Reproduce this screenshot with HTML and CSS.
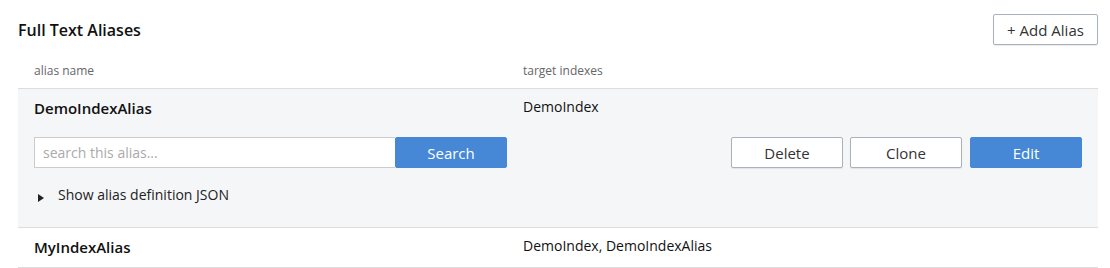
FILE: index.html
```html
<!DOCTYPE html>
<html lang="en">
<head>
    <meta charset="UTF-8">
    <title>Full Text Aliases</title>
    <link rel="stylesheet" href="styles.css">
</head>
<body>
    <div class="panel">
        <div class="panel-header">
            <h2>Full Text Aliases</h2>
            <button class="btn btn-default add-btn">+ Add Alias</button>
        </div>

        <div class="alias-table">
            <div class="table-head">
                <div>alias name</div>
                <div>target indexes</div>
            </div>

            <div class="alias-row expanded">
                <div class="row-main">
                    <div class="alias-name">DemoIndexAlias</div>
                    <div class="alias-targets">DemoIndex</div>
                </div>
                <div class="row-tools">
                    <div class="search-group">
                        <input type="text" placeholder="search this alias...">
                        <button class="btn btn-primary">Search</button>
                    </div>
                    <div class="actions">
                        <button class="btn btn-default">Delete</button>
                        <button class="btn btn-default">Clone</button>
                        <button class="btn btn-primary">Edit</button>
                    </div>
                </div>
                <div class="json-toggle">
                    <span class="caret"></span>
                    Show alias definition JSON
                </div>
            </div>

            <div class="alias-row">
                <div class="row-main">
                    <div class="alias-name">MyIndexAlias</div>
                    <div class="alias-targets">DemoIndex, DemoIndexAlias</div>
                </div>
            </div>
        </div>
    </div>
</body>
</html>
```

FILE: styles.css
```css
body {
    font-family: 'Open Sans', sans-serif;
    margin: 0;
    padding: 0;
    background-color: #fff;
    color: #111;
}
.panel {
    padding: 14px 12px 0 18px;
}
.panel-header {
    display: flex;
    justify-content: space-between;
    align-items: center;
}
.panel-header h2 {
    margin: 0;
    font-size: 16px;
    font-weight: 600;
    color: #111;
}
.btn {
    font-family: 'Open Sans', sans-serif;
    font-size: 15px;
    height: 31px;
    padding: 0 12px;
    border-radius: 2px;
    cursor: pointer;
}
.btn-default {
    background: #fff;
    color: #333;
    border: 1px solid #a9b1bc;
    box-shadow: 0 1px 1px rgba(0, 0, 0, 0.08);
}
.btn-primary {
    background: #4687d6;
    color: #fff;
    border: 1px solid #4687d6;
}
.add-btn {
    width: 105px;
    padding: 0;
}
.table-head {
    display: grid;
    grid-template-columns: 489px 1fr;
    padding: 17px 16px 9px;
    font-size: 12px;
    line-height: 17px;
    color: #666;
    border-bottom: 1px solid #ddd;
}
.alias-row {
    border-bottom: 1px solid #ddd;
    padding: 9px 16px 10px;
}
.alias-row.expanded {
    background-color: #f5f6f8;
    padding-bottom: 23px;
}
.row-main {
    display: grid;
    grid-template-columns: 489px 1fr;
    align-items: center;
    line-height: 20px;
}
.alias-name {
    font-size: 15px;
    font-weight: 600;
}
.alias-targets {
    font-size: 14px;
    margin-top: -2px;
}
.row-tools {
    display: flex;
    justify-content: space-between;
    margin-top: 19px;
}
.search-group {
    display: flex;
}
.search-group input {
    width: 361px;
    height: 31px;
    box-sizing: border-box;
    border: 1px solid #ccc;
    border-right: none;
    padding: 0 8px;
    font-family: 'Open Sans', sans-serif;
    font-size: 14px;
    color: #333;
    background: #fff;
}
.search-group input::placeholder {
    color: #aaa;
}
.search-group .btn {
    width: 112px;
}
.actions {
    display: flex;
    gap: 7px;
}
.actions .btn {
    width: 112px;
}
.actions .btn-primary {
    margin-left: 1px;
}
.json-toggle {
    margin-top: 18px;
    display: flex;
    align-items: center;
    font-size: 14px;
    line-height: 18px;
    color: #222;
}
.caret {
    width: 0;
    height: 0;
    border-top: 4.5px solid transparent;
    border-bottom: 4.5px solid transparent;
    border-left: 6px solid #222;
    margin: 6px 14px 0 4px;
}
```
